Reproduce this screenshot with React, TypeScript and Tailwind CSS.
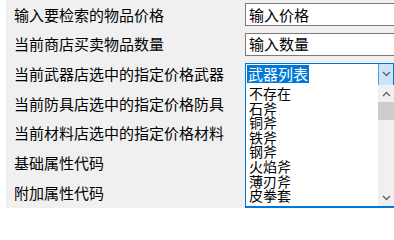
const labels = [
  "输入要检索的物品价格",
  "当前商店买卖物品数量",
  "当前武器店选中的指定价格武器",
  "当前防具店选中的指定价格防具",
  "当前材料店选中的指定价格材料",
  "基础属性代码",
  "附加属性代码",
];

const weapons = ["不存在", "石斧", "铜斧", "铁斧", "钢斧", "火焰斧", "薄刃斧", "皮拳套"];

function Chevron({ up = false }: { up?: boolean }) {
  return (
    <svg width="9" height="6" viewBox="0 0 9 6" className="block">
      <polyline
        points={up ? "1,5 4.5,1.5 8,5" : "1,1 4.5,4.5 8,1"}
        fill="none"
        stroke="#606060"
        strokeWidth="1.3"
      />
    </svg>
  );
}

export default function App() {
  return (
    <div
      className="relative h-[209px] w-[394px] overflow-hidden bg-white text-[15px] text-black"
      style={{ fontFamily: '"Noto Sans CJK SC", "Noto Sans", sans-serif' }}
    >
      <div className="relative ml-[6px] flex h-[208px] bg-[#f0f0f0]">
        {/* labels */}
        <div className="flex w-[239px] shrink-0 flex-col pl-[8px]">
          {labels.map((label) => (
            <div className="flex h-[29.8px] items-center whitespace-nowrap" key={label}>
              {label}
            </div>
          ))}
        </div>

        {/* controls */}
        <div className="flex flex-col">
          <div className="flex h-[29.8px] items-center">
            <div className="flex h-[23px] w-[170px] items-center border border-[#7a7a7a] bg-white pl-[3px]">
              输入价格
            </div>
          </div>
          <div className="flex h-[29.8px] items-center">
            <div className="flex h-[23px] w-[170px] items-center border border-[#7a7a7a] bg-white pl-[3px]">
              输入数量
            </div>
          </div>
          <div className="flex h-[29.8px] items-center">
            <div className="flex h-[23px] w-[149px] border border-[#0078d7] bg-white">
              <div className="flex flex-1 items-center pl-[1px]">
                <span className="bg-[#0078d7] px-[1px] leading-[18px] text-white">武器列表</span>
              </div>
              <div className="flex w-[15px] items-center justify-center border-l border-[#5aa0dc] bg-[#cce4f7]">
                <Chevron />
              </div>
            </div>
          </div>
        </div>

        {/* open dropdown list */}
        <div className="absolute top-[85px] left-[239px] flex h-[123px] w-[149px] border-b-2 border-l border-[#0078d7] bg-white">
          <div className="flex flex-1 flex-col pt-[1px] pl-[3px] text-[14px]">
            {weapons.map((w) => (
              <div className="h-[14.6px] leading-[14.6px] whitespace-nowrap" key={w}>
                {w}
              </div>
            ))}
          </div>
          <div className="flex w-[16px] flex-col bg-[#f0f0f0]">
            <div className="flex h-[17px] items-center justify-center">
              <Chevron up />
            </div>
            <div className="h-[18px] bg-[#cdcdcd]" />
            <div className="flex-1" />
            <div className="flex h-[16px] items-center justify-center">
              <Chevron />
            </div>
          </div>
        </div>
      </div>
    </div>
  );
}
